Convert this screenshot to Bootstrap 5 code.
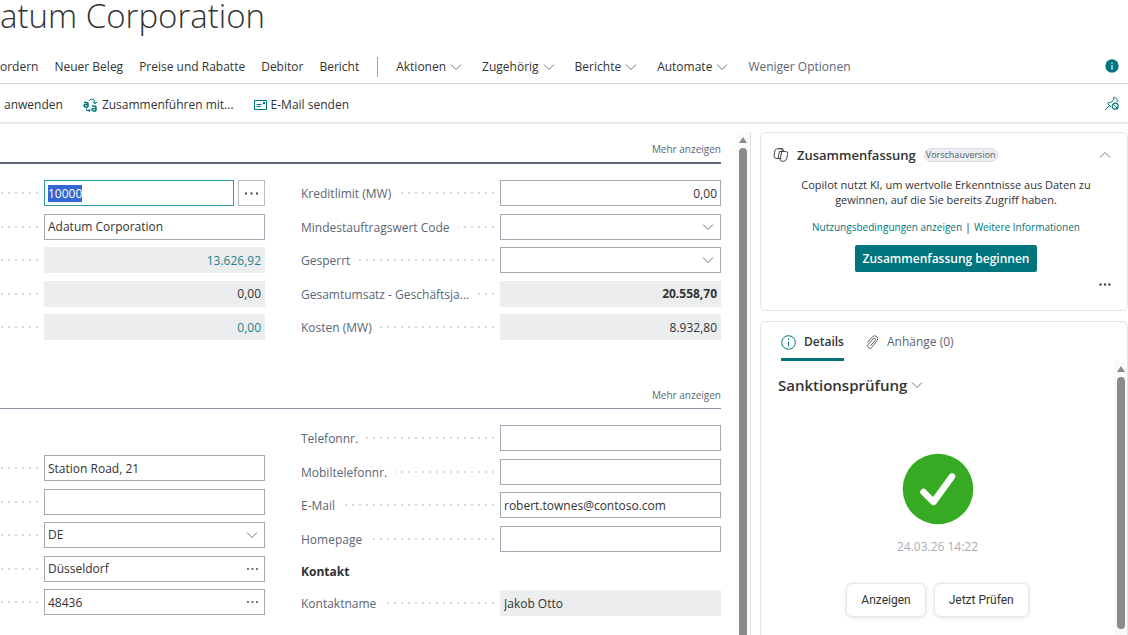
<!DOCTYPE html>
<html lang="de">
<head>
<meta charset="utf-8">
<meta name="viewport" content="width=device-width, initial-scale=1">
<title>Adatum Corporation</title>
<link href="https://cdn.jsdelivr.net/npm/bootstrap@5.3.0/dist/css/bootstrap.min.css" rel="stylesheet">
<style>
  :root { --teal: #00757d; --ink: #323334; --muted: #5b6675; --edge: #a3a9b5; }
  body { font-family: "Open Sans", "Noto Sans", sans-serif; font-size: 12px; line-height: 16px; color: var(--ink); }
  button { color: inherit; }
  .page-title { font-size: 33px; font-weight: 300; line-height: 32px; height: 48px; }
  .bar-top { height: 36px; padding-right: 9px; border-bottom: 1px solid #d4d6d8; }
  .bar-sub { height: 40px; padding-right: 9px; border-bottom: 2px solid #e9eaeb; }
  .cmds { padding-top: 3px; }
  .direct { gap: 16px; }
  .menus { gap: 20px; }
  .tools { gap: 20px; }
  .plain { background: none; border: 0; padding: 0; color: inherit; }
  .less { color: var(--muted); }
  .rule { width: 1px; height: 20px; margin: 0 2px; background: #9ba3b3; }
  .chev { width: 12px; height: 12px; fill: none; stroke: #777; }
  .ico { fill: none; stroke: var(--teal); flex: none; }
  .pane { padding-right: 15px; }
  .fast-head { font-size: 10px; height: 40px; padding-bottom: 5px; color: var(--muted); border-bottom: 2px solid #5f687b; }
  .fast-head.thin { height: 41px; border-bottom: 1px solid #8b91a2; }
  .cols { display: grid; grid-template-columns: 265fr 420fr; column-gap: 36px; }
  .stack5 { height: 160px; }
  .stack4 { height: 127px; }
  .street { padding-top: 30px; }
  .line { height: 26px; color: var(--muted); }
  .line label { padding-top: 2px; }
  .dots { height: 2px; margin: 0 6px 0 8px; background: repeating-linear-gradient(to left, #d6d8da 0 2px, transparent 2px 7px); }
  .box { width: 221px; height: 26px; flex: none; border: 1px solid var(--edge); border-radius: 0; background: #fff; }
  .box, .box input { padding: 0 3px; font-size: 12px; line-height: 18px; color: var(--ink); }
  .box.wrap { padding: 0; }
  .box input { border: 0; outline: 0; background: none; min-width: 0; height: 24px; }
  .box.ro { background: #ebedee; border-color: #ebedee; }
  .box.link { color: #1d8389; }
  .box.num { text-align: right; }
  .box.key { width: 190px; border-color: #2f9a9f; outline: 0; }
  .box.key::selection { background: #3367d1; color: #fff; }
  .assist { width: 27px; height: 26px; border: 1px solid #bbb; background: #fff; padding: 0; }
  select.box { appearance: none; background: #fff url("data:image/svg+xml,%3Csvg xmlns='http://www.w3.org/2000/svg' viewBox='0 0 12 12' fill='none' stroke='%23777'%3E%3Cpath d='M1 3.500l5 5 5-5'/%3E%3C/svg%3E") no-repeat right 6px center / 12px 12px; }
  .more { width: 23px; }
  .group-name { line-height: 18px; margin: 11px 0 9px; font-size: 12px; }
  .track { width: 15px; background: #fafafa; border-right: 1px solid #dfe0e2; padding-top: 5px; }
  .tri { width: 8px; height: 6px; fill: #8a8a8a; flex: none; }
  .thumb { width: 8px; background: #8a8a8a; border-radius: 4px 4px 0 0; margin-top: 5px; }
  .side { width: 377px; padding: 8px 0 0 9px; gap: 10px; flex: none; }
  .tile { border: 1px solid #e1e3e5; border-radius: 6px; background: #fff; }
  .summary { padding: 12px 16px 18px 12px; }
  .tile h2 { font-size: 13px; line-height: 20px; font-weight: 600; margin: 0; }
  .tile h2.part { font-size: 15px; margin: 14px 0 0 17px; }
  .pill { font-size: 9px; line-height: 12px; padding: 0 1px; border: 1px solid #d9dce2; border-radius: 8px; background: #eceef1; color: #555d69; }
  .intro { font-size: 11px; line-height: 15px; padding-left: 8px; }
  .intro p { margin: 12px 20px 10px; }
  .intro a { color: var(--teal); text-decoration: none; font-size: 10px; }
  .start { background: var(--teal); color: #fff; font-size: 12px; font-weight: 600; line-height: 18px; border: 0; border-radius: 2px; padding: 5px 8px 4px; }
  .tabs { gap: 22px; padding-left: 20px; }
  .tab { height: 39px; color: var(--muted); background: none; border: 0; border-bottom: 3px solid transparent; padding: 4px 0 0; }
  .tab.active { color: var(--ink); font-weight: 600; border-color: var(--teal); }
  .result { padding-top: 58px; }
  .action { font-family: Roboto, sans-serif; font-size: 12px; height: 34px; padding: 0 14px; border: 1px solid #e6e6e6; border-radius: 6px; background: #fff; box-shadow: 0 1px 4px rgba(0,0,0,.1); }
  .stamp { color: #a9adb8; margin: 14px 0 28px; }
  .inner-track { width: 13px; background: #fafafa; padding-top: 5px; }
  .inner-track .thumb { border-radius: 4px; margin-bottom: 6px; }
</style>
</head>
<body class="vh-100 d-flex flex-column overflow-hidden">
<header>
  <h1 class="page-title mb-0">atum Corporation</h1>
  <nav class="bar-top d-flex align-items-center justify-content-between" aria-label="Menü">
    <div class="cmds direct d-flex align-items-center">
      <button class="plain">ordern</button>
      <button class="plain">Neuer Beleg</button>
      <button class="plain">Preise und Rabatte</button>
      <button class="plain">Debitor</button>
      <button class="plain">Bericht</button>
      <span class="rule"></span>
      <div class="menus d-flex align-items-center">
        <button class="plain d-flex align-items-center gap-1">Aktionen <svg class="chev" viewBox="0 0 12 12"><path d="M1 3.500l5 5 5-5"/></svg></button>
        <button class="plain d-flex align-items-center gap-1">Zugehörig <svg class="chev" viewBox="0 0 12 12"><path d="M1 3.500l5 5 5-5"/></svg></button>
        <button class="plain d-flex align-items-center gap-1">Berichte <svg class="chev" viewBox="0 0 12 12"><path d="M1 3.500l5 5 5-5"/></svg></button>
        <button class="plain d-flex align-items-center gap-1">Automate <svg class="chev" viewBox="0 0 12 12"><path d="M1 3.500l5 5 5-5"/></svg></button>
        <button class="plain less">Weniger Optionen</button>
      </div>
    </div>
    <button class="plain d-flex" aria-label="Info"><svg width="14" height="14" viewBox="0 0 14 14"><circle cx="7" cy="7" r="6.700" fill="#00757d"/><path d="M7 6v4.500M7 3.500v1.300" stroke="#fff" stroke-width="1.100"/></svg></button>
  </nav>
  <nav class="bar-sub d-flex align-items-center justify-content-between" aria-label="Aktionen">
    <div class="cmds tools d-flex align-items-center">
      <button class="plain ps-1">anwenden</button>
      <button class="plain d-flex align-items-center gap-1">
        <svg class="ico" width="15" height="14" viewBox="0 0 15 14"><path d="M1 4.500h2.700q1.300 0 1.300 1.300V9M5 6.600H2.600Q1 6.600 1 7.800T2.600 9H5" stroke-width="1.500"/><path d="M9 8h2.700q1.300 0 1.300 1.300V13M13 10.400h-2.400Q9 10.400 9 11.600t1.600 1.300H13" stroke-width="1.500"/><path d="M6 3Q7 1 9 1t3 3v1.500M9.800 3.700L12 5.900l2.200-2.200M3.500 10.500v2H7M5.700 11l1.500 1.500L5.700 14"/></svg>
        Zusammenführen mit...</button>
      <button class="plain d-flex align-items-center gap-1">
        <svg class="ico" width="13" height="10" viewBox="0 0 13 10"><path d="M.5.500h12v9H.500zM2.500 4.500h5M2.500 6.500h4"/><path d="M9 2h2v2H9z" fill="#00757d" stroke="none"/></svg>
        E-Mail senden</button>
    </div>
    <button class="plain d-flex" aria-label="Lösen">
      <svg class="ico" width="14" height="14" viewBox="0 0 14 14"><path d="M.3 13.700l4.200-4.200M6 11L2.500 7.500Q4 6 6.200 6.300L8.700 3.500Q8.300 2 9.300.8L13.200 4.700Q12.600 5.500 11.300 5.400"/><circle cx="10.200" cy="10.200" r="3" stroke-width="1.200"/><path d="M8.200 8.200l4 4"/></svg>
    </button>
  </nav>
</header>
<div class="d-flex flex-grow-1 overflow-hidden">
  <main class="pane flex-grow-1">
    <section>
      <div class="fast-head d-flex justify-content-end align-items-end"><button class="plain">Mehr anzeigen</button></div>
      <div class="cols pt-3">
        <div class="stack5 d-flex flex-column justify-content-between">
          <div class="line d-flex align-items-center"><span class="dots ms-0 flex-grow-1"></span><input class="box key" id="nr" aria-label="Nr." value="10000"><button class="assist ms-1" aria-label="Auswählen"><svg width="13" height="3" viewBox="0 0 13 3" fill="#444" class="d-block mx-auto"><path d="M0 .5h2v2H0zM5.500.500h2v2h-2zM11 .5h2v2h-2z"/></svg></button></div>
          <div class="line d-flex align-items-center"><span class="dots ms-0 flex-grow-1"></span><input class="box" aria-label="Name" value="Adatum Corporation"></div>
          <div class="line d-flex align-items-center"><span class="dots ms-0 flex-grow-1"></span><input class="box ro num link" aria-label="Saldo (MW)" value="13.626,92" readonly></div>
          <div class="line d-flex align-items-center"><span class="dots ms-0 flex-grow-1"></span><input class="box ro num" aria-label="Saldo als Kreditor" value="0,00" readonly></div>
          <div class="line d-flex align-items-center"><span class="dots ms-0 flex-grow-1"></span><input class="box ro num link" aria-label="Fälliger Saldo" value="0,00" readonly></div>
        </div>
        <div class="stack5 d-flex flex-column justify-content-between">
          <div class="line d-flex align-items-center"><label for="kl">Kreditlimit (MW)</label><span class="dots flex-grow-1"></span><input class="box num" id="kl" value="0,00"></div>
          <div class="line d-flex align-items-center"><label for="mc">Mindestauftragswert Code</label><span class="dots flex-grow-1"></span><select class="box" id="mc"><option></option></select></div>
          <div class="line d-flex align-items-center"><label for="gs">Gesperrt</label><span class="dots flex-grow-1"></span><select class="box" id="gs"><option></option></select></div>
          <div class="line d-flex align-items-center"><label for="gu">Gesamtumsatz - Geschäftsja...</label><span class="dots flex-grow-1"></span><input class="box ro num fw-bold" id="gu" value="20.558,70" readonly></div>
          <div class="line d-flex align-items-center"><label for="ko">Kosten (MW)</label><span class="dots flex-grow-1"></span><input class="box ro num" id="ko" value="8.932,80" readonly></div>
        </div>
      </div>
    </section>
    <section class="pt-4 mt-1">
      <div class="fast-head thin d-flex justify-content-end align-items-end"><button class="plain">Mehr anzeigen</button></div>
      <div class="cols pt-3">
        <div class="street">
          <div class="stack5 d-flex flex-column justify-content-between">
            <div class="line d-flex align-items-center"><span class="dots ms-0 flex-grow-1"></span><input class="box" aria-label="Adresse" value="Station Road, 21"></div>
            <div class="line d-flex align-items-center"><span class="dots ms-0 flex-grow-1"></span><input class="box" aria-label="Adresse 2"></div>
            <div class="line d-flex align-items-center"><span class="dots ms-0 flex-grow-1"></span><select class="box" aria-label="Land"><option>DE</option></select></div>
            <div class="line d-flex align-items-center"><span class="dots ms-0 flex-grow-1"></span><div class="box wrap d-flex"><input class="flex-grow-1" aria-label="Ort" value="Düsseldorf"><button class="plain more" aria-label="Ort wählen"><svg width="11" height="2" viewBox="0 0 11 2" fill="#777" class="d-block mx-auto"><path d="M0 0h2v2H0zM4.500 0h2v2h-2zM9 0h2v2H9z"/></svg></button></div></div>
            <div class="line d-flex align-items-center"><span class="dots ms-0 flex-grow-1"></span><div class="box wrap d-flex"><input class="flex-grow-1" aria-label="PLZ-Code" value="48436"><button class="plain more" aria-label="PLZ wählen"><svg width="11" height="2" viewBox="0 0 11 2" fill="#777" class="d-block mx-auto"><path d="M0 0h2v2H0zM4.500 0h2v2h-2zM9 0h2v2H9z"/></svg></button></div></div>
          </div>
        </div>
        <div>
          <div class="stack4 d-flex flex-column justify-content-between">
            <div class="line d-flex align-items-center"><label for="te">Telefonnr.</label><span class="dots flex-grow-1"></span><input class="box" id="te"></div>
            <div class="line d-flex align-items-center"><label for="mo">Mobiltelefonnr.</label><span class="dots flex-grow-1"></span><input class="box" id="mo"></div>
            <div class="line d-flex align-items-center"><label for="em">E-Mail</label><span class="dots flex-grow-1"></span><input class="box" id="em" value="robert.townes@contoso.com"></div>
            <div class="line d-flex align-items-center"><label for="ho">Homepage</label><span class="dots flex-grow-1"></span><input class="box" id="ho"></div>
          </div>
          <h3 class="group-name fw-bold">Kontakt</h3>
          <div class="line d-flex align-items-center"><label for="kn">Kontaktname</label><span class="dots flex-grow-1"></span><input class="box ro" id="kn" value="Jakob Otto" readonly></div>
        </div>
      </div>
    </section>
  </main>
  <div class="track d-flex flex-column align-items-center mt-2">
    <svg class="tri" viewBox="0 0 8 6"><path d="M4 0l4 6H0z"/></svg>
    <div class="thumb flex-grow-1"></div>
  </div>
  <aside class="side d-flex flex-column">
    <section class="tile summary">
      <div class="d-flex align-items-center">
        <svg class="me-1" width="16" height="14" viewBox="0 0 16 14" fill="none" stroke="#444"><path d="M6.500 10.500H3.200Q.6 10.500 1 7.500L1.800 3Q2.300.700 4.500.700h5L7.200 10.200q-.5 2.500 1 3h2.500q2.200 0 2.800-2.400l1.200-4.300Q15.400 3.500 12.800 3.500H9.500M5 .7h4q1.500.3 1.500 2.800M6.500 3.500h3.800M5 10.500h3.500M6.500 3.500L5 10.500"/></svg>
        <h2 class="ms-1">Zusammenfassung</h2>
        <span class="pill ms-2">Vorschauversion</span>
        <button class="plain d-flex ms-auto" aria-label="Einklappen"><svg class="chev" viewBox="0 0 12 12"><path d="M1 8.500l5-5 5 5"/></svg></button>
      </div>
      <div class="intro text-center">
        <p>Copilot nutzt KI, um wertvolle Erkenntnisse aus Daten zu gewinnen, auf die Sie bereits Zugriff haben.</p>
        <p><a href="#">Nutzungsbedingungen anzeigen</a> | <a href="#">Weitere Informationen</a></p>
        <button class="start">Zusammenfassung beginnen</button>
      </div>
      <div class="text-end pt-1"><button class="plain" aria-label="Mehr"><svg width="12" height="3" viewBox="0 0 12 3" fill="#444"><circle cx="1.500" cy="1.500" r="1.200"/><circle cx="6" cy="1.500" r="1.200"/><circle cx="10.500" cy="1.500" r="1.200"/></svg></button></div>
    </section>
    <section class="tile flex-grow-1 d-flex flex-column border-bottom-0 rounded-bottom-0">
      <div class="tabs d-flex">
        <button class="tab active d-flex align-items-center gap-2"><svg class="ico" width="15" height="15" viewBox="0 0 15 15"><circle cx="7.500" cy="7.500" r="6.800"/><path d="M7.500 6.500v5M7.500 3.500v1.500"/></svg>Details</button>
        <button class="tab d-flex align-items-center gap-2"><svg width="13" height="15" viewBox="0 0 13 15" fill="none" stroke="#666"><path d="M1.500 7.500l5-5.800q2-1.800 4.200-.2 2.200 1.800.4 4L5.800 12.300q-1.500 1.700-3.200.7-2-1.300-.6-3.200l5-5.900q1-1 2-.3 1 .8.100 2L4.500 10.700"/></svg>Anhänge (0)</button>
      </div>
      <div class="d-flex flex-grow-1">
        <div class="flex-grow-1">
          <h2 class="part d-flex align-items-center gap-1">Sanktionsprüfung <svg class="chev" viewBox="0 0 12 12"><path d="M1 3.500l5 5 5-5"/></svg></h2>
          <div class="result text-center">
            <svg class="d-block mx-auto" width="72" height="72" viewBox="0 0 72 72"><circle cx="36" cy="36" r="35.300" fill="#36aa22"/><path d="M21.500 39L31.500 49 50 23.500" fill="none" stroke="#fff" stroke-width="6.500" stroke-linecap="round" stroke-linejoin="round"/></svg>
            <p class="stamp">24.03.26 14:22</p>
            <div class="d-flex justify-content-center gap-2">
              <button class="action">Anzeigen</button>
              <button class="action">Jetzt Prüfen</button>
            </div>
          </div>
        </div>
        <div class="inner-track d-flex flex-column align-items-center">
          <svg class="tri" viewBox="0 0 8 6"><path d="M4 0l4 6H0z"/></svg>
          <div class="thumb flex-grow-1"></div>
        </div>
      </div>
    </section>
  </aside>
</div>
<script src="https://cdn.jsdelivr.net/npm/bootstrap@5.3.0/dist/js/bootstrap.bundle.min.js"></script>
<script>
  const key = document.getElementById('nr');
  key.focus({ preventScroll: true });
  key.select();
</script>
</body>
</html>
